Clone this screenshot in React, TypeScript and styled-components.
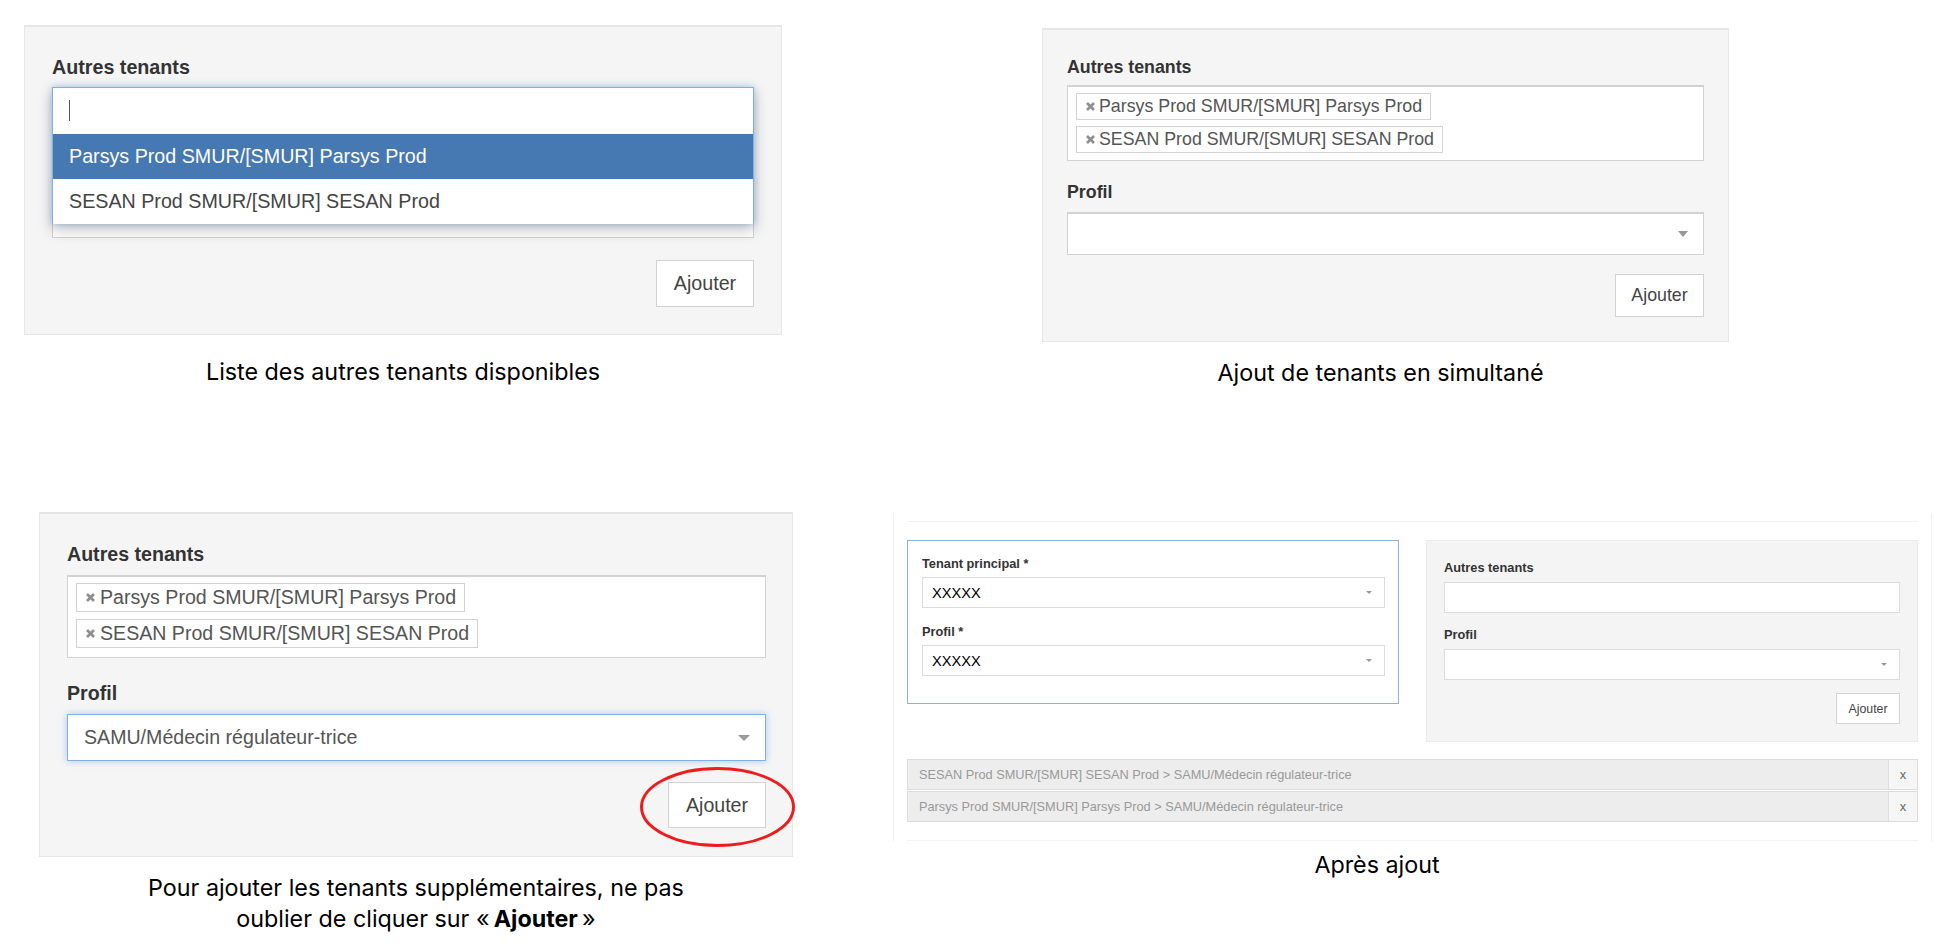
import React from 'react';
import styled, { createGlobalStyle } from 'styled-components';

const GlobalStyle = createGlobalStyle`
    html, body {
        margin: 0;
        padding: 0;
        background: #fff;
    }
    body {
        width: 1957px;
        height: 950px;
        overflow: hidden;
        font-family: "Liberation Sans", Arial, sans-serif;
    }
`

const Page = styled.div`
    display: flex;
    flex-flow: column;
`

const Row = styled.div<{ $h: number }>`
    display: flex;
    align-items: flex-start;
    height: ${p => p.$h}px;
`

const Figure = styled.div<{ $left: number; $top: number; $w: number }>`
    margin-left: ${p => p.$left}px;
    margin-top: ${p => p.$top}px;
    width: ${p => p.$w}px;
    flex: none;
`

const Panel = styled.div<{ $pt: number; $pb: number; $px: number; $pr?: number; $size: number }>`
    position: relative;
    background: #f5f5f5;
    border: 1px solid #e6e6e6;
    border-top-width: 2px;
    box-sizing: border-box;
    padding: ${p => p.$pt}px ${p => p.$pr ?? p.$px}px ${p => p.$pb}px ${p => p.$px}px;
    font-size: ${p => p.$size}px;
    color: #555;
`

const Label = styled.div<{ $lh: number; $mt?: number; $mb: number }>`
    font-weight: bold;
    color: #333;
    line-height: ${p => p.$lh}px;
    margin-top: ${p => p.$mt ?? 0}px;
    margin-bottom: ${p => p.$mb}px;
`

const Control = styled.div<{ $h: number; $focus?: boolean; $pl?: number; $pr?: number }>`
    position: relative;
    display: flex;
    align-items: center;
    justify-content: space-between;
    box-sizing: border-box;
    height: ${p => p.$h}px;
    padding: 0 ${p => p.$pr ?? 0}px 0 ${p => p.$pl ?? 0}px;
    background: #fff;
    border: 1px solid ${p => (p.$focus ? '#80b0e6' : '#d2d2d2')};
    border-top-width: ${p => (p.$focus ? 1 : 2)}px;
    box-shadow: ${p => (p.$focus ? '0 0 7px rgba(102, 160, 230, 0.55)' : 'none')};
`

const ChipBox = styled.div<{ $h: number; $pad: number; $gap: number }>`
    display: flex;
    flex-flow: column;
    align-items: flex-start;
    gap: ${p => p.$gap}px;
    box-sizing: border-box;
    height: ${p => p.$h}px;
    padding: ${p => p.$pad - 2}px 8px 0;
    background: #fff;
    border: 1px solid #d2d2d2;
    border-top-width: 2px;
`

const Chip = styled.div<{ $h: number; $gap: number }>`
    display: flex;
    align-items: center;
    gap: ${p => p.$gap}px;
    box-sizing: border-box;
    height: ${p => p.$h}px;
    padding: 0 8px 0 9px;
    background: #fff;
    border: 1px solid #d2d2d2;
    color: #555;
    white-space: nowrap;
`

const ChipClose = styled.svg`
    flex: none;
    stroke: #8f8f8f;
    stroke-width: 2.7;
`

const Caret = styled.span<{ $w: number; $h: number }>`
    width: 0;
    height: 0;
    border-left: ${p => p.$w}px solid transparent;
    border-right: ${p => p.$w}px solid transparent;
    border-top: ${p => p.$h}px solid #999;
`

const ButtonRow = styled.div<{ $mt: number }>`
    display: flex;
    justify-content: flex-end;
    margin-top: ${p => p.$mt}px;
`

const AddButton = styled.div<{ $w: number; $h: number }>`
    display: flex;
    align-items: center;
    justify-content: center;
    box-sizing: border-box;
    width: ${p => p.$w}px;
    height: ${p => p.$h}px;
    background: #fff;
    border: 1px solid #d2d2d2;
    color: #444;
`

const Dropdown = styled.div`
    position: absolute;
    z-index: 1;
    left: -1px;
    right: -1px;
    top: -2px;
    height: 137px;
    box-sizing: border-box;
    background: #fff;
    border: 1px solid #80b0e6;
    box-shadow: 0 6px 14px rgba(0, 0, 0, 0.22), 0 0 7px rgba(102, 160, 230, 0.5);
`

const SearchLine = styled.div`
    height: 46px;
    box-sizing: border-box;
    padding: 12px 0 0 16px;
`

const TextCursor = styled.div`
    width: 1px;
    height: 21px;
    background: #555;
`

const Option = styled.div<{ $active?: boolean }>`
    display: flex;
    align-items: center;
    height: 45px;
    padding-left: 16px;
    background: ${p => (p.$active ? '#4678b2' : '#fff')};
    color: ${p => (p.$active ? '#fff' : '#444')};
`

const RedRing = styled.svg`
    position: absolute;
    right: -3px;
    top: 253px;
    overflow: visible;
`

const Caption = styled.div<{ $mt: number; $pr?: number }>`
    margin-top: ${p => p.$mt}px;
    padding-right: ${p => p.$pr ?? 0}px;
    font-family: Inter, "Noto Sans", sans-serif;
    font-size: 23.3px;
    line-height: 31px;
    color: #000;
    text-align: center;
`

/* Après ajout screenshot */
const Frame = styled.div`
    box-sizing: border-box;
    padding: 8px 13px 0;
    border-left: 1px solid #f0f0f0;
    border-right: 1px solid #f0f0f0;
    height: 328px;
`

const FrameInner = styled.div`
    box-sizing: border-box;
    height: 320px;
    padding-top: 18px;
    border-top: 1px solid #f3f3f3;
    border-bottom: 1px solid #f3f3f3;
    font-size: 12.8px;
    color: #555;
`

const Columns = styled.div`
    display: grid;
    grid-template-columns: 492px 492px;
    gap: 27px;
    align-items: start;
`

const MainBox = styled.div`
    box-sizing: border-box;
    height: 164px;
    padding: 14px 13px 0 14px;
    border: 1px solid #8fb0dc;
`

const SidePanel = styled.div`
    box-sizing: border-box;
    height: 202px;
    padding: 19px 17px 0;
    background: #f4f4f4;
    border: 1px solid #ececec;
`

const MiniControl = styled.div`
    display: flex;
    align-items: center;
    justify-content: space-between;
    box-sizing: border-box;
    height: 31px;
    padding: 0 12px 0 9px;
    background: #fff;
    border: 1px solid #dcdcdc;
    font-size: 14.6px;
    color: #000;
`

const MiniButton = styled(AddButton)`
    margin-left: auto;
    margin-top: 13px;
    font-size: 12.3px;
`

const ResultRows = styled.div`
    display: flex;
    flex-flow: column;
    gap: 1px;
    margin-top: 17px;
`

const ResultRow = styled.div`
    display: flex;
    height: 31px;
    background: #ededed;
    border: 1px solid #dcdcdc;
    box-sizing: border-box;
    color: #999;
    font-size: 12.75px;
`

const ResultText = styled.div`
    flex: 1;
    display: flex;
    align-items: center;
    padding-left: 11px;
`

const ResultRemove = styled.div`
    display: flex;
    align-items: center;
    justify-content: center;
    width: 28px;
    background: #f6f6f6;
    border-left: 1px solid #dfdfdf;
    color: #666;
`

const Selected = styled.span`
    font-weight: bold;
`

const parsys = 'Parsys Prod SMUR/[SMUR] Parsys Prod'
const sesan = 'SESAN Prod SMUR/[SMUR] SESAN Prod'
const medecin = 'SAMU/Médecin régulateur-trice'

const CloseMark = () => (
    <ChipClose width={9} height={9} viewBox="0 0 9 9">
        <path d="M1 1 L8 8 M8 1 L1 8" />
    </ChipClose>
)

const TenantChips = ({ h, gap }: { h: number; gap: number }) => (
    <>
        <Chip $h={h} $gap={gap}><CloseMark />{parsys}</Chip>
        <Chip $h={h} $gap={gap}><CloseMark />{sesan}</Chip>
    </>
)

const App = () => {
    return (
        <Page>
            <GlobalStyle />
            <Row $h={512}>
                <Figure $left={24} $top={25} $w={758}>
                    <Panel $pt={28} $pb={27} $px={27} $size={19.7}>
                        <Label $lh={24} $mb={8}>Autres tenants</Label>
                        <Control $h={151}>
                            <Dropdown>
                                <SearchLine><TextCursor /></SearchLine>
                                <Option $active>{parsys}</Option>
                                <Option>{sesan}</Option>
                            </Dropdown>
                        </Control>
                        <ButtonRow $mt={22}>
                            <AddButton $w={98} $h={47}>Ajouter</AddButton>
                        </ButtonRow>
                    </Panel>
                    <Caption $mt={21}>Liste des autres tenants disponibles</Caption>
                </Figure>
                <Figure $left={260} $top={28} $w={687}>
                    <Panel $pt={26} $pb={24} $px={24} $size={17.8}>
                        <Label $lh={22} $mb={7}>Autres tenants</Label>
                        <ChipBox $h={76} $pad={8} $gap={6}>
                            <TenantChips h={27} gap={4} />
                        </ChipBox>
                        <Label $lh={22} $mt={20} $mb={9}>Profil</Label>
                        <Control $h={43} $pr={15}>
                            <span />
                            <Caret $w={5} $h={6} />
                        </Control>
                        <ButtonRow $mt={19}>
                            <AddButton $w={89} $h={43}>Ajouter</AddButton>
                        </ButtonRow>
                    </Panel>
                    <Caption $mt={15} $pr={10}>Ajout de tenants en simultané</Caption>
                </Figure>
            </Row>
            <Row $h={438}>
                <Figure $left={39} $top={0} $w={754}>
                    <Panel $pt={28} $pb={28} $px={27} $pr={26} $size={19.6}>
                        <Label $lh={24} $mb={9}>Autres tenants</Label>
                        <ChipBox $h={83} $pad={8} $gap={7}>
                            <TenantChips h={29} gap={5} />
                        </ChipBox>
                        <Label $lh={24} $mt={23} $mb={9}>Profil</Label>
                        <Control $h={47} $focus $pl={16} $pr={15}>
                            {medecin}
                            <Caret $w={6} $h={6} />
                        </Control>
                        <ButtonRow $mt={21}>
                            <AddButton $w={98} $h={46}>Ajouter</AddButton>
                        </ButtonRow>
                        <RedRing width={155} height={80} viewBox="0 0 155 80">
                            <ellipse cx={77.5} cy={40} rx={76} ry={38.5} fill="none" stroke="#ee1c1c" strokeWidth={3} />
                        </RedRing>
                    </Panel>
                    <Caption $mt={15}>
                        Pour ajouter les tenants supplémentaires, ne pas<br />
                        oublier de cliquer sur {'«\u202f'}<Selected>Ajouter</Selected>{'\u202f»'}
                    </Caption>
                </Figure>
                <Figure $left={100} $top={1} $w={1039}>
                    <Frame>
                        <FrameInner>
                            <Columns>
                                <MainBox>
                                    <Label $lh={18} $mb={4}>Tenant principal *</Label>
                                    <MiniControl>XXXXX<Caret $w={3} $h={3} /></MiniControl>
                                    <Label $lh={18} $mt={15} $mb={4}>Profil *</Label>
                                    <MiniControl>XXXXX<Caret $w={3} $h={3} /></MiniControl>
                                </MainBox>
                                <SidePanel>
                                    <Label $lh={16} $mb={6}>Autres tenants</Label>
                                    <MiniControl />
                                    <Label $lh={16} $mt={14} $mb={6}>Profil</Label>
                                    <MiniControl><span /><Caret $w={3} $h={3} /></MiniControl>
                                    <MiniButton $w={64} $h={31}>Ajouter</MiniButton>
                                </SidePanel>
                            </Columns>
                            <ResultRows>
                                <ResultRow>
                                    <ResultText>{sesan} &gt; {medecin}</ResultText>
                                    <ResultRemove>x</ResultRemove>
                                </ResultRow>
                                <ResultRow>
                                    <ResultText>{parsys} &gt; {medecin}</ResultText>
                                    <ResultRemove>x</ResultRemove>
                                </ResultRow>
                            </ResultRows>
                        </FrameInner>
                    </Frame>
                    <Caption $mt={8} $pr={71}>Après ajout</Caption>
                </Figure>
            </Row>
        </Page>
    );
}

export default App;
